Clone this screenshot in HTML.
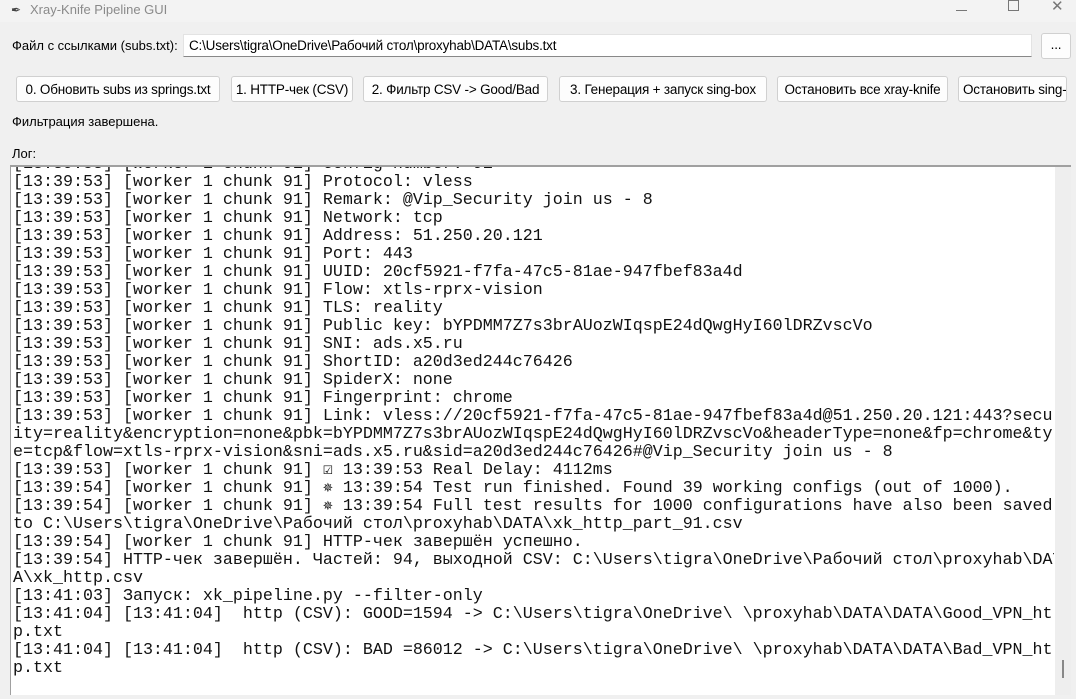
<!DOCTYPE html>
<html><head><meta charset="utf-8"><style>
html,body{margin:0;padding:0;width:1076px;height:699px;overflow:hidden;background:#f0f0f0;font-family:"Segoe UI","Liberation Sans","DejaVu Sans",sans-serif;}
.abs{position:absolute}
.title{left:0;top:0;width:1076px;height:22px;background:#f3f3f3}
.ui{font-size:13px;color:#000}
.btn{position:absolute;top:76px;height:26px;border:1px solid #d0d0d0;border-radius:3px;background:#fdfdfd;font-size:13.5px;line-height:26px;text-align:center;white-space:nowrap;overflow:hidden;box-sizing:border-box;letter-spacing:-0.2px}
.log{left:10px;top:165px;width:1061px;height:530px;background:#fff;border-top:2px solid #a0a0a0;border-left:1px solid #a0a0a0;box-sizing:border-box;overflow:hidden}
.txt{position:absolute;left:2px;top:-11px;width:1041px;overflow:hidden;font-family:"Liberation Mono","DejaVu Sans Mono",monospace;font-size:16.67px;line-height:18px;white-space:pre;color:#111}
.sb{position:absolute;right:0;top:0;width:16px;height:528px;background:#eeeeee}
</style></head><body>
<div class="abs title"></div>
<div class="abs" style="left:11px;top:3px;font-size:12px;color:#444">&#x2712;</div>
<div class="abs" style="left:30px;top:2px;font-size:13px;color:#8a8a8a">Xray-Knife Pipeline GUI</div>
<div class="abs" style="left:956px;top:10px;width:11px;height:1px;background:#777"></div>
<div class="abs" style="left:1008px;top:0px;width:9px;height:9px;border:1px solid #777"></div>
<div class="abs" style="left:1051px;top:-3px;font-size:15px;color:#777">&#x2715;</div>

<div class="abs ui" style="left:12px;top:38px">Файл с ссылками (subs.txt):</div>
<div class="abs" style="left:183px;top:34px;width:849px;height:23px;background:#fff;border:1px solid #e3e3e3;border-bottom:1px solid #888;box-sizing:border-box;font-size:13.5px;line-height:21px;padding-left:5px;letter-spacing:-0.2px">C:\Users\tigra\OneDrive\Рабочий стол\proxyhab\DATA\subs.txt</div>
<div class="btn" style="left:1041px;top:33px;width:30px;height:26px;line-height:22px">...</div>

<div class="btn" style="left:16px;width:204px">0. Обновить subs из springs.txt</div>
<div class="btn" style="left:231px;width:122px">1. HTTP-чек (CSV)</div>
<div class="btn" style="left:363px;width:185px">2. Фильтр CSV -&gt; Good/Bad</div>
<div class="btn" style="left:559px;width:208px">3. Генерация + запуск sing-box</div>
<div class="btn" style="left:777px;width:171px">Остановить все xray-knife</div>
<div class="btn" style="left:958px;width:109px;text-align:left;padding-left:4px">Остановить sing-box</div>

<div class="abs ui" style="left:12px;top:114px">Фильтрация завершена.</div>
<div class="abs ui" style="left:12px;top:146px">Лог:</div>

<div class="abs log">
<div class="txt">[13:39:53] [worker 1 chunk 91] Config number: 91
[13:39:53] [worker 1 chunk 91] Protocol: vless
[13:39:53] [worker 1 chunk 91] Remark: @Vip_Security join us - 8
[13:39:53] [worker 1 chunk 91] Network: tcp
[13:39:53] [worker 1 chunk 91] Address: 51.250.20.121
[13:39:53] [worker 1 chunk 91] Port: 443
[13:39:53] [worker 1 chunk 91] UUID: 20cf5921-f7fa-47c5-81ae-947fbef83a4d
[13:39:53] [worker 1 chunk 91] Flow: xtls-rprx-vision
[13:39:53] [worker 1 chunk 91] TLS: reality
[13:39:53] [worker 1 chunk 91] Public key: bYPDMM7Z7s3brAUozWIqspE24dQwgHyI60lDRZvscVo
[13:39:53] [worker 1 chunk 91] SNI: ads.x5.ru
[13:39:53] [worker 1 chunk 91] ShortID: a20d3ed244c76426
[13:39:53] [worker 1 chunk 91] SpiderX: none
[13:39:53] [worker 1 chunk 91] Fingerprint: chrome
[13:39:53] [worker 1 chunk 91] Link: vless://20cf5921-f7fa-47c5-81ae-947fbef83a4d@51.250.20.121:443?secur
ity=reality&amp;encryption=none&amp;pbk=bYPDMM7Z7s3brAUozWIqspE24dQwgHyI60lDRZvscVo&amp;headerType=none&amp;fp=chrome&amp;typ
e=tcp&amp;flow=xtls-rprx-vision&amp;sni=ads.x5.ru&amp;sid=a20d3ed244c76426#@Vip_Security join us - 8
[13:39:53] [worker 1 chunk 91] ☑ 13:39:53 Real Delay: 4112ms
[13:39:54] [worker 1 chunk 91] ✵ 13:39:54 Test run finished. Found 39 working configs (out of 1000).
[13:39:54] [worker 1 chunk 91] ✵ 13:39:54 Full test results for 1000 configurations have also been saved
to C:\Users\tigra\OneDrive\Рабочий стол\proxyhab\DATA\xk_http_part_91.csv
[13:39:54] [worker 1 chunk 91] HTTP-чек завершён успешно.
[13:39:54] HTTP-чек завершён. Частей: 94, выходной CSV: C:\Users\tigra\OneDrive\Рабочий стол\proxyhab\DAT
A\xk_http.csv
[13:41:03] Запуск: xk_pipeline.py --filter-only
[13:41:04] [13:41:04]  http (CSV): GOOD=1594 -&gt; C:\Users\tigra\OneDrive\ \proxyhab\DATA\DATA\Good_VPN_htt
p.txt
[13:41:04] [13:41:04]  http (CSV): BAD =86012 -&gt; C:\Users\tigra\OneDrive\ \proxyhab\DATA\DATA\Bad_VPN_htt
p.txt</div>
<div class="sb"><div style="position:absolute;left:7px;top:493px;width:2px;height:18px;background:#888"></div></div>
</div>
</body></html>
